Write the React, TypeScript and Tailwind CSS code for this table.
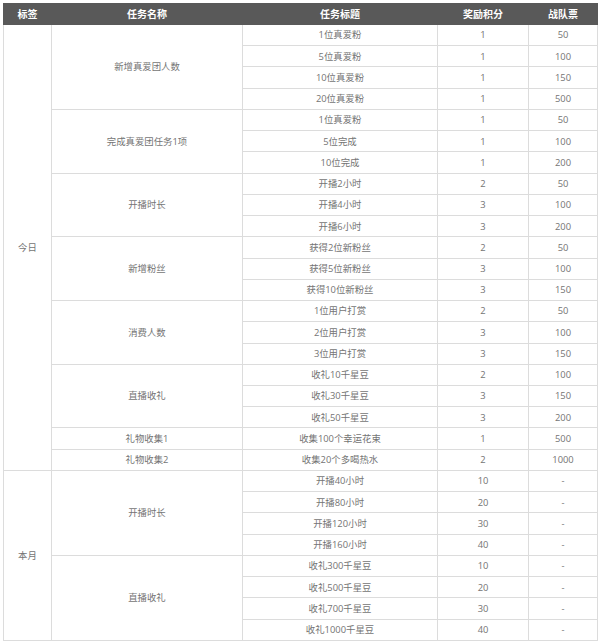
import React from 'react';

interface Task {
  name: string;
  rows: [string, string, string][];
}

interface Section {
  label: string;
  tasks: Task[];
}

const sections: Section[] = [
  {
    label: '今日',
    tasks: [
      {
        name: '新增真爱团人数',
        rows: [
          ['1位真爱粉', '1', '50'],
          ['5位真爱粉', '1', '100'],
          ['10位真爱粉', '1', '150'],
          ['20位真爱粉', '1', '500'],
        ],
      },
      {
        name: '完成真爱团任务1项',
        rows: [
          ['1位真爱粉', '1', '50'],
          ['5位完成', '1', '100'],
          ['10位完成', '1', '200'],
        ],
      },
      {
        name: '开播时长',
        rows: [
          ['开播2小时', '2', '50'],
          ['开播4小时', '3', '100'],
          ['开播6小时', '3', '200'],
        ],
      },
      {
        name: '新增粉丝',
        rows: [
          ['获得2位新粉丝', '2', '50'],
          ['获得5位新粉丝', '3', '100'],
          ['获得10位新粉丝', '3', '150'],
        ],
      },
      {
        name: '消费人数',
        rows: [
          ['1位用户打赏', '2', '50'],
          ['2位用户打赏', '3', '100'],
          ['3位用户打赏', '3', '150'],
        ],
      },
      {
        name: '直播收礼',
        rows: [
          ['收礼10千星豆', '2', '100'],
          ['收礼30千星豆', '3', '150'],
          ['收礼50千星豆', '3', '200'],
        ],
      },
      { name: '礼物收集1', rows: [['收集100个幸运花束', '1', '500']] },
      { name: '礼物收集2', rows: [['收集20个多喝热水', '2', '1000']] },
    ],
  },
  {
    label: '本月',
    tasks: [
      {
        name: '开播时长',
        rows: [
          ['开播40小时', '10', '-'],
          ['开播80小时', '20', '-'],
          ['开播120小时', '30', '-'],
          ['开播160小时', '40', '-'],
        ],
      },
      {
        name: '直播收礼',
        rows: [
          ['收礼300千星豆', '10', '-'],
          ['收礼500千星豆', '20', '-'],
          ['收礼700千星豆', '30', '-'],
          ['收礼1000千星豆', '40', '-'],
        ],
      },
    ],
  },
];

const td = 'border border-[#dcdcdc] p-0 text-center align-middle';
const th = 'border border-[#595959] p-0 font-bold';

const App: React.FC = () => {
  return (
    <div className="w-[600px] h-[643px] bg-white pt-[3px] pl-[3px]" style={{ fontFamily: '"Open Sans", "Noto Sans CJK SC", sans-serif' }}>
      <table className="table-fixed border-collapse w-[594px] text-[9.4px] leading-none text-[#747474]">
        <thead>
          <tr className="h-[21px] bg-[#595959] text-white text-[10px]">
            <th className={`${th} w-[48px]`}>标签</th>
            <th className={`${th} w-[191px]`}>任务名称</th>
            <th className={`${th} w-[195px]`}>任务标题</th>
            <th className={`${th} w-[91px]`}>奖励积分</th>
            <th className={`${th} w-[69px]`}>战队票</th>
          </tr>
        </thead>
        <tbody>
          {sections.map((section) => {
            const total = section.tasks.reduce((n, t) => n + t.rows.length, 0);
            return section.tasks.map((task, ti) =>
              task.rows.map((row, ri) => (
                <tr key={`${section.label}-${ti}-${ri}`} className="h-[21.24px]">
                  {ti === 0 && ri === 0 && (
                    <td rowSpan={total} className={td}>
                      {section.label}
                    </td>
                  )}
                  {ri === 0 && (
                    <td rowSpan={task.rows.length} className={td}>
                      {task.name}
                    </td>
                  )}
                  <td className={td}>{row[0]}</td>
                  <td className={td}>{row[1]}</td>
                  <td className={td}>{row[2]}</td>
                </tr>
              ))
            );
          })}
        </tbody>
      </table>
    </div>
  );
};

export default App;
